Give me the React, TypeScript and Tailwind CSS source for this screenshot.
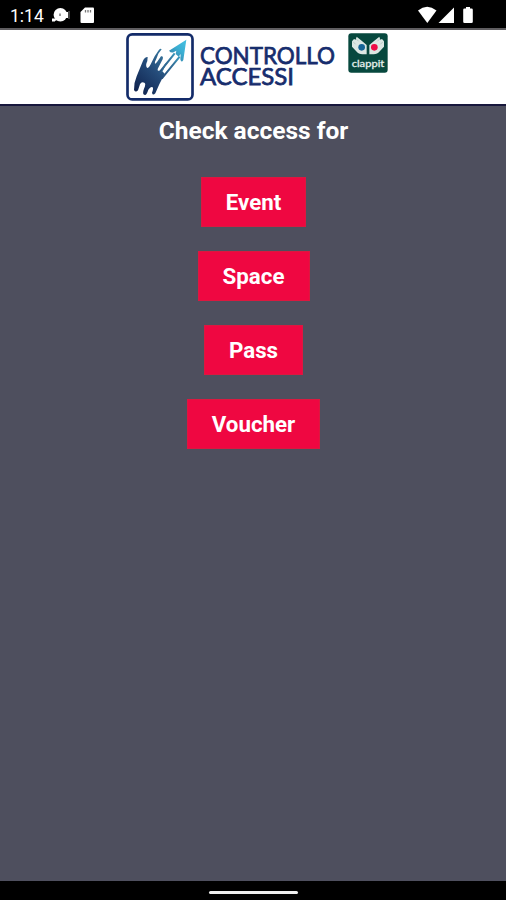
const accessTypes = [
  { id: 'event', label: 'Event', width: 'w-[105px]' },
  { id: 'space', label: 'Space', width: 'w-[112px]' },
  { id: 'pass', label: 'Pass', width: 'w-[99px]' },
  { id: 'voucher', label: 'Voucher', width: 'w-[133px]' },
];

const StatusBar = () => (
  <div className="flex h-[30px] shrink-0 items-start justify-between border-b-2 border-[#5f5d60] bg-black pl-[10px] pr-[32px] text-white">
    <div className="flex items-start">
      <span className="w-[42px] pt-[5px] text-[17.5px] leading-[22px]">1:14</span>
      <svg className="mt-[7px] h-[18px] w-[18px]" viewBox="0 0 18 18" fill="currentColor">
        <circle cx="8.4" cy="7.8" r="6.8" />
        <path d="M0 11.500h3v3H0zM3 11l2 2-2 1z" />
        <path d="M14 5h2v6h-2z" />
        <path d="M17 4v8" stroke="#888" strokeWidth="1" />
        <path d="M8 6.500v2.500" stroke="#777" strokeWidth="1.500" />
      </svg>
      <svg className="ml-[10px] mt-[7px] h-[17px] w-[15px]" viewBox="0 0 15 17" fill="currentColor">
        <path d="M5 .5h8q1 0 1 1V15q0 1-1 1H1.5q-1 0-1-1V5Z" />
        <path d="M5.500 3v2.500M8 3v2.500M10.500 3v2.500" stroke="#777" strokeWidth="1.3" />
      </svg>
    </div>
    <svg className="mt-[6px] h-[18px] w-[56px]" viewBox="0 0 56 18" fill="currentColor">
      <path d="M0 4.5Q9-2.8 18.5 4.5L9.3 17Z" />
      <path d="M20.5 17 36 1.5V17Z" />
      <path d="M48 1h4v1.500h1.500q1.300 0 1.300 1.300V15.700q0 1.300-1.300 1.300h-7q-1.300 0-1.300-1.300V3.800q0-1.300 1.300-1.300h1.500Z" />
    </svg>
  </div>
);

const ArrowLogo = () => (
  <svg className="h-[68px] w-[68px]" viewBox="-13 -9 204 204">
    <defs>
      <linearGradient id="arrow" x1="15" y1="165" x2="165" y2="15" gradientUnits="userSpaceOnUse">
        <stop offset="0" stopColor="#10234f" />
        <stop offset=".38" stopColor="#244a78" />
        <stop offset=".65" stopColor="#34739b" />
        <stop offset=".85" stopColor="#3baed2" />
        <stop offset="1" stopColor="#45bfe0" />
      </linearGradient>
    </defs>
    <rect x="-8.500" y="-5" width="195" height="195" rx="14" fill="#fff" stroke="#132b69" strokeWidth="8" />
    <path
      fill="url(#arrow)"
      d="M52 63Q44 62 38 74L19 121Q10 142 11 162 16 171 23 163L29 145Q33 136 42 140 48 142 41 158 34 176 44 177 49 177 54 161 61 150 67 154 70 158 65 170 67 180 75 172L87 145 103 113 92 101Q81 109 82 99L97 70Q100 59 92 61L80 78Q72 89 74 77 79 67 84 53L94 40Q91 36 85 43L73 61 64 79Q54 101 49 94 45 87 51 75Z"
    />
    <path fill="none" stroke="url(#arrow)" strokeWidth="6" d="M85 112 133 52M94 128 148 62" />
    <path
      fill="url(#arrow)"
      d="M168 11 116 44Q123 53 131 48L138 44 136 54 145 62 151 54 150 70Q153 82 159 72Z"
    />
    <path d="M95 103Q101 82 109 80L106 87 99 102 87 116Z" fill="#326d96" />
  </svg>
);

const Wordmark = () => (
  <svg
    className="ml-[6px] h-[62px] w-[140px] overflow-visible font-['Lato','Liberation_Sans',sans-serif] font-normal"
    viewBox="0 0 140 62"
    fill="#172d6d"
    stroke="#172d6d"
    strokeWidth=".75"
    fontSize="23.5"
  >
    <text x="0" y="30.500" textLength="135" lengthAdjust="spacingAndGlyphs">CONTROLLO</text>
    <text x="0" y="52" textLength="94" lengthAdjust="spacingAndGlyphs">ACCESSI</text>
  </svg>
);

const ClappitLogo = () => (
  <svg className="ml-[8px] h-[40px] w-[40px]" viewBox="24 15 120 120">
    <rect x="25" y="16" width="118" height="118" rx="9" fill="#07483e" />
    <path
      fill="#dce7e3"
      d="M36 40 42 33 47 35 50 26 65 38 80 51V79H67Q56 79 48 69L36 56ZM132 40 126 33 121 35 118 26 103 38 88 51V79H101Q112 79 120 69L132 56Z"
    />
    <path d="M39 41 47 49M49 33 56 40M129 41 121 49M119 33 112 40" stroke="#a1b9b3" strokeWidth="2" />
    <circle cx="65" cy="58" r="10" fill="#176596" />
    <circle cx="103" cy="58" r="10" fill="#ee0b46" />
    <text
      x="35"
      y="116"
      fill="#e6efec"
      stroke="#e6efec"
      strokeWidth=".8"
      fontSize="27"
      textLength="98"
      lengthAdjust="spacingAndGlyphs"
      className="font-['Lato','Liberation_Sans',sans-serif] font-normal"
    >
      clappit
    </text>
  </svg>
);

const Header = () => (
  <header className="flex h-[76px] shrink-0 items-start justify-center border-b-2 border-[#17173c] bg-white pl-[8px] pt-[3px]">
    <ArrowLogo />
    <Wordmark />
    <ClappitLogo />
  </header>
);

export default function App() {
  return (
    <div className="flex h-[900px] w-[506px] flex-col overflow-hidden bg-[#4e4f5e] font-['Roboto','Liberation_Sans',sans-serif]">
      <StatusBar />
      <Header />
      <main className="flex flex-1 flex-col items-center pl-[1px]">
        <h1 className="mt-[9px] whitespace-nowrap text-[24.500px] font-bold leading-[32px] text-white">
          Check access for
        </h1>
        <div className="mt-[30px] flex flex-col items-center gap-6">
          {accessTypes.map((type) => (
            <button
              key={type.id}
              className={`${type.width} h-[50px] border border-[#dc183f] bg-[#ef0741] pt-[2px] text-[22.300px] font-bold text-white`}
            >
              {type.label}
            </button>
          ))}
        </div>
      </main>
      <div className="flex h-[19px] shrink-0 items-center justify-center bg-black">
        <div className="mt-[3px] h-[3px] w-[89px] rounded-full bg-[#efefef]" />
      </div>
    </div>
  );
}
